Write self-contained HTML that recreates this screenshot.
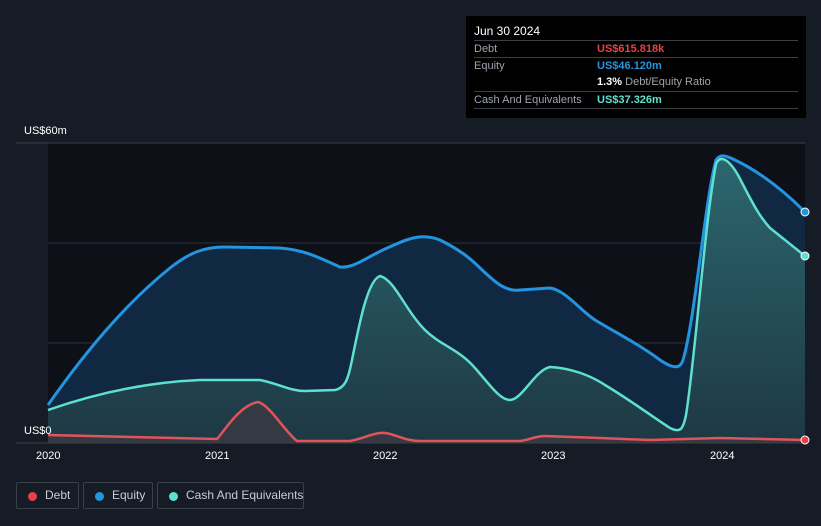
<!DOCTYPE html>
<html><head><meta charset="utf-8"><style>
html,body{margin:0;width:821px;height:526px;background:#161c26;font-family:"Liberation Sans",sans-serif;overflow:hidden;position:relative}
.tt{position:absolute;left:466px;top:16px;width:340px;height:102px;background:#000;color:#fff;font-size:11px}
.tt .r{position:absolute;left:8px;width:324px;border-top:1px solid #3a3f47;height:16px;line-height:16px;white-space:nowrap}
.tt .l{color:#a0a4aa;position:absolute;left:0}
.tt .v{position:absolute;left:123px;font-weight:bold}
.leg{position:absolute;top:482px;height:27px;border:1px solid #3a3f49;border-radius:2px;color:#c8ccd2;font-size:12px;line-height:25px;box-sizing:border-box;white-space:nowrap}
.leg i{position:absolute;left:11px;top:9px;width:9px;height:9px;border-radius:50%}
.ax{position:absolute;color:#fff;font-size:11px}
</style></head><body>
<svg width="821" height="526" style="position:absolute;left:0;top:0">
<defs>
<linearGradient id="gc" x1="0" y1="0" x2="0" y2="1"><stop offset="0" stop-color="#2f6d74"/><stop offset="1" stop-color="#1f3a44"/></linearGradient>
</defs>
<rect x="48" y="143" width="757" height="300" fill="#0d1117"/>
<line x1="16" y1="143" x2="805" y2="143" stroke="#3a3f47"/>
<line x1="48" y1="243" x2="805" y2="243" stroke="#2a3038"/>
<line x1="48" y1="343" x2="805" y2="343" stroke="#2a3038"/>
<path d="M48,405 C90,345 130,300 170,268 C190,252 205,247 225,247 L280,248 C305,250 320,258 340,267 C355,268 365,258 385,249 C405,240 420,232 440,240 C460,250 470,258 480,268 C495,282 505,292 520,290 L550,288 C565,290 580,310 595,320 C620,335 640,345 660,360 C672,368 680,370 683,360 C695,320 705,200 716,160 C720,154 725,155 735,160 C760,172 785,192 805,212 L805,443 L48,443 Z" fill="#112a44" opacity="0.95"/>
<path d="M48,410 C100,392 150,382 200,380 L260,380 C280,384 290,391 305,391 L335,390 C345,388 348,380 352,360 C360,320 368,280 380,276 C395,280 405,310 425,330 C440,345 460,350 475,368 C490,385 500,400 510,400 C522,400 535,370 550,367 C570,368 590,375 605,385 C630,400 650,415 670,428 C680,433 683,430 686,415 C695,360 705,220 716,164 C720,155 728,158 738,175 C750,198 758,215 770,228 C785,240 795,248 805,256 L805,443 L48,443 Z" fill="url(#gc)" opacity="0.9"/>
<path d="M48,435 L217,439 C225,430 240,405 258,402 C270,405 285,432 297,441 L350,441 C365,438 375,432 385,433 C395,434 405,441 420,441 L520,441 C530,440 535,436 545,436 L600,438 L650,440 L720,438 L805,440 L805,443 L48,443Z" fill="#3a3a44" opacity="0.8"/>
<path d="M48,405 C90,345 130,300 170,268 C190,252 205,247 225,247 L280,248 C305,250 320,258 340,267 C355,268 365,258 385,249 C405,240 420,232 440,240 C460,250 470,258 480,268 C495,282 505,292 520,290 L550,288 C565,290 580,310 595,320 C620,335 640,345 660,360 C672,368 680,370 683,360 C695,320 705,200 716,160 C720,154 725,155 735,160 C760,172 785,192 805,212" fill="none" stroke="#2394df" stroke-width="3"/>
<path d="M48,410 C100,392 150,382 200,380 L260,380 C280,384 290,391 305,391 L335,390 C345,388 348,380 352,360 C360,320 368,280 380,276 C395,280 405,310 425,330 C440,345 460,350 475,368 C490,385 500,400 510,400 C522,400 535,370 550,367 C570,368 590,375 605,385 C630,400 650,415 670,428 C680,433 683,430 686,415 C695,360 705,220 716,164 C720,155 728,158 738,175 C750,198 758,215 770,228 C785,240 795,248 805,256" fill="none" stroke="#5fe0cf" stroke-width="2.5"/>
<path d="M48,435 L217,439 C225,430 240,405 258,402 C270,405 285,432 297,441 L350,441 C365,438 375,432 385,433 C395,434 405,441 420,441 L520,441 C530,440 535,436 545,436 L600,438 L650,440 L720,438 L805,440" fill="none" stroke="#e0545a" stroke-width="2.5"/>
<line x1="16" y1="443" x2="805" y2="443" stroke="#3a3f47"/>
<circle cx="805" cy="212" r="4" fill="#2394df" stroke="#fff" stroke-width="1"/>
<circle cx="805" cy="256" r="4" fill="#5fe0cf" stroke="#fff" stroke-width="1"/>
<circle cx="805" cy="440" r="4" fill="#e84045" stroke="#fff" stroke-width="1"/>
</svg>
<div class="ax" style="left:24px;top:125px">US$60m</div>
<div class="ax" style="left:24px;top:425px">US$0</div>
<div class="ax" style="left:36px;top:450px">2020</div>
<div class="ax" style="left:205px;top:450px">2021</div>
<div class="ax" style="left:373px;top:450px">2022</div>
<div class="ax" style="left:541px;top:450px">2023</div>
<div class="ax" style="left:710px;top:450px">2024</div>
<div class="tt">
<div style="position:absolute;left:8px;top:8px;font-size:12px">Jun 30 2024</div>
<div class="r" style="top:24px"><span class="l">Debt</span><span class="v" style="color:#e84045">US$615.818k</span></div>
<div class="r" style="top:41px"><span class="l">Equity</span><span class="v" style="color:#2394df">US$46.120m</span></div>
<div class="r" style="top:58px;border-top:none"><span class="v" style="color:#fff">1.3% <span style="color:#a0a4aa;font-weight:normal">Debt/Equity Ratio</span></span></div>
<div class="r" style="top:75px"><span class="l">Cash And Equivalents</span><span class="v" style="color:#5fe0cf">US$37.326m</span></div>
<div class="r" style="top:92px;height:0"></div>
</div>
<div class="leg" style="left:16px;width:63px"><i style="background:#e84045"></i><span style="position:absolute;left:28px">Debt</span></div>
<div class="leg" style="left:83px;width:70px"><i style="background:#2394df"></i><span style="position:absolute;left:28px">Equity</span></div>
<div class="leg" style="left:157px;width:147px"><i style="background:#5fe0cf"></i><span style="position:absolute;left:28px">Cash And Equivalents</span></div>
</body></html>
